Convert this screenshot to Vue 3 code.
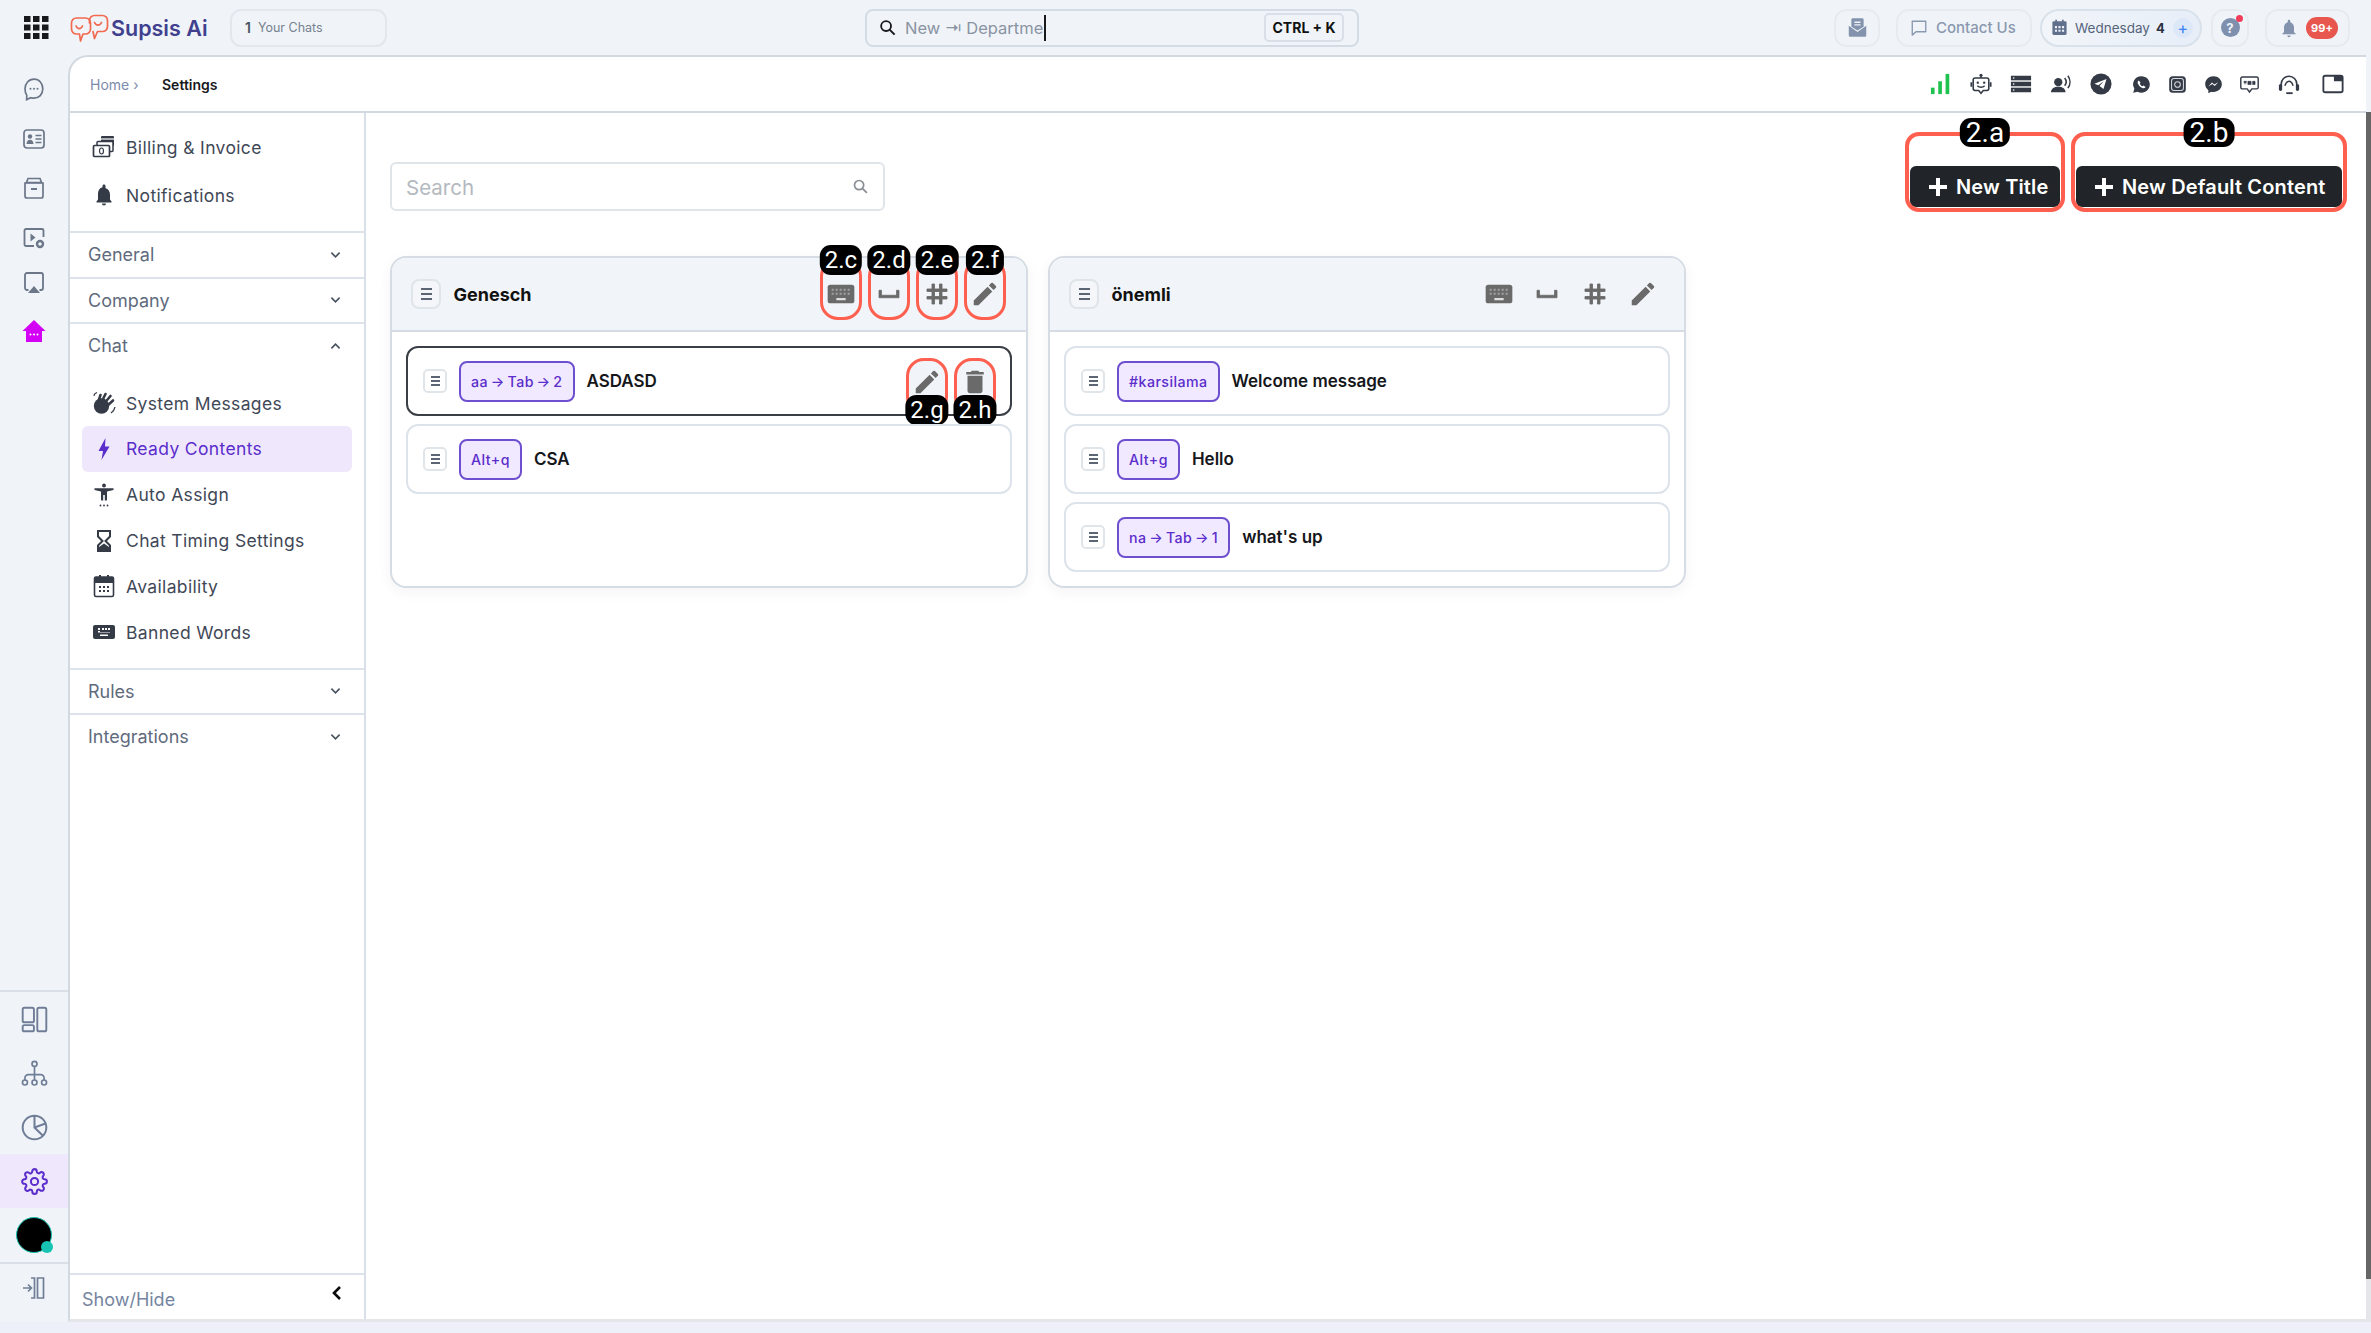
<script setup>
const icons = {
  chat: '<path d="M12 2.200c5.300 0 8.800 4.200 8.800 9.600 0 5.600-3.800 9.400-8.800 9.400-1.200 0-2.200-.1-3.200-.5L4.600 22.600l.2-4.400C3.200 16.400 3 14 3 11.800 3 6.400 6.700 2.200 12 2.200z" fill="none" stroke="#6b7688" stroke-width="1.700"/><circle cx="8.500" cy="11.800" r="1" fill="#6b7688"/><circle cx="12" cy="11.800" r="1" fill="#6b7688"/><circle cx="15.500" cy="11.800" r="1" fill="#6b7688"/>',
  card: '<rect x="2" y="3" width="20" height="18" rx="3" fill="none" stroke="#6b7688" stroke-width="1.700"/><circle cx="8" cy="9.500" r="2.200" fill="#6b7688"/><path d="M4.500 17c.3-3 1.600-4.300 3.500-4.300s3.200 1.300 3.500 4.300z" fill="#6b7688"/><path d="M13.500 8.500h6M13.500 12h6M13.500 15.500h6" stroke="#6b7688" stroke-width="1.600"/>',
  box: '<path d="M6 2.500h12l1.500 4h-15z" fill="none" stroke="#6b7688" stroke-width="1.700"/><path d="M3 7h18v13a2 2 0 0 1-2 2H5a2 2 0 0 1-2-2z" fill="none" stroke="#6b7688" stroke-width="1.700"/><path d="M9 13h6" stroke="#6b7688" stroke-width="2"/>',
  video: '<path d="M12 20H4a1.500 1.500 0 0 1-1.500-1.500v-14A1.500 1.500 0 0 1 4 3h16a1.500 1.500 0 0 1 1.500 1.500V11" fill="none" stroke="#6b7688" stroke-width="1.800"/><path d="M8.500 7.500l5 4-5 4z" fill="#6b7688"/><circle cx="18" cy="18" r="3" fill="none" stroke="#6b7688" stroke-width="2.400"/>',
  air: '<path d="M6.500 19H5a2 2 0 0 1-2-2V4a2 2 0 0 1 2-2h14a2 2 0 0 1 2 2v13a2 2 0 0 1-2 2h-1.500" fill="none" stroke="#6b7688" stroke-width="1.800"/><path d="M12 15l6 7H6z" fill="#6b7688"/>',
  house: '<path d="M12 1L.5 12H4v11h16V12h3.500z" fill="#d400f5"/><circle cx="8.500" cy="15.500" r="1" fill="#fff"/><circle cx="12" cy="15.500" r="1" fill="#fff"/><circle cx="15.500" cy="15.500" r="1" fill="#fff"/>',
  layout: '<rect x="1.500" y="1.500" width="10" height="13" rx="1.500" fill="none" stroke="#6f7d97" stroke-width="1.700"/><rect x="1.500" y="17" width="10" height="5.500" rx="1.500" fill="none" stroke="#6f7d97" stroke-width="1.700"/><rect x="14.500" y="1.500" width="8" height="21" rx="1.500" fill="none" stroke="#6f7d97" stroke-width="1.700"/>',
  tree: '<circle cx="12" cy="3.500" r="2.200" fill="none" stroke="#6f7d97" stroke-width="1.500"/><circle cx="3.500" cy="20" r="2.200" fill="none" stroke="#6f7d97" stroke-width="1.500"/><circle cx="12" cy="20" r="2.200" fill="none" stroke="#6f7d97" stroke-width="1.500"/><circle cx="20.500" cy="20" r="2.200" fill="none" stroke="#6f7d97" stroke-width="1.500"/><path d="M12 5.700v12.100M3.500 17.800v-1.800a3 3 0 0 1 3-3h11a3 3 0 0 1 3 3v1.800" fill="none" stroke="#6f7d97" stroke-width="1.500"/>',
  pie: '<circle cx="12" cy="12" r="10.500" fill="none" stroke="#6f7d97" stroke-width="1.800"/><path d="M12 1.500V12l7.500 7.300M12 12l9.800-3.500" fill="none" stroke="#6f7d97" stroke-width="1.800"/>',
  collapse: '<path d="M1 12h8M6 8.500l3.500 3.500L6 15.500" fill="none" stroke="#6f7d97" stroke-width="1.700"/><path d="M9 2h3.500v20H9M15.500 2h6v20h-6z" fill="none" stroke="#6f7d97" stroke-width="1.700"/>',
  signal: '<rect x="1" y="16" width="4" height="7" fill="#1fc24e"/><rect x="9" y="9" width="4" height="14" fill="#1fc24e"/><rect x="17" y="1" width="4" height="22" fill="#1fc24e"/>',
  bot: '<path d="M12 1.500v4" stroke="#343a46" stroke-width="1.600"/><circle cx="12" cy="2.500" r="1.700" fill="#343a46"/><path d="M5.500 5.500h13a2 2 0 0 1 2 2v9.500a2 2 0 0 1-2 2h-4l-2.500 3-2.500-3h-4a2 2 0 0 1-2-2V7.500a2 2 0 0 1 2-2z" fill="none" stroke="#343a46" stroke-width="1.700"/><circle cx="8.500" cy="10.500" r="1.300" fill="#343a46"/><circle cx="15.500" cy="10.500" r="1.300" fill="#343a46"/><path d="M8 14c2 2 6 2 8 0" fill="none" stroke="#343a46" stroke-width="1.500"/><path d="M1.500 10v5M22.500 10v5" stroke="#343a46" stroke-width="2"/>',
  server: '<rect x="1" y="3" width="22" height="5" fill="#343a46"/><rect x="1" y="9.500" width="22" height="5" fill="#343a46"/><rect x="1" y="16" width="22" height="5" fill="#343a46"/><circle cx="4" cy="5.500" r=".9" fill="#fff"/><circle cx="4" cy="12" r=".9" fill="#fff"/><circle cx="4" cy="18.500" r=".9" fill="#fff"/>',
  voice: '<circle cx="9" cy="10" r="4.500" fill="#343a46"/><path d="M1 21c.5-4.500 3.500-6 8-6s7.500 1.500 8 6z" fill="#343a46"/><path d="M16 5.500c2 2.500 2 6 0 8.500M19.500 3c3 4 3 9.500 0 13.500" fill="none" stroke="#343a46" stroke-width="1.700"/>',
  telegram: '<circle cx="12" cy="12" r="11.500" fill="#343a46"/><path d="M18 6.500L4.800 11.800l4.200 1.500 6-4.300-4.600 5.200 4.300 3.300z" fill="#fff"/>',
  whatsapp: '<path d="M12 1.500c5.800 0 10.500 4.500 10.500 10.300S17.800 22.300 12 22.300c-1.800 0-3.500-.5-5-1.300l-5.500 1.500 1.500-5.200A10.300 10.300 0 0 1 12 1.500z" fill="#343a46"/><path d="M8.500 6.800c-1.500 1-1.800 2.600-.8 4.700 1.100 2.300 3 4.200 5.200 5 1.800.7 3.500.2 4.200-1.200l-2.500-2-1.400 1c-1.600-.7-2.700-1.900-3.400-3.300l1-1.400z" fill="#fff"/>',
  insta: '<rect x="1.500" y="1.500" width="21" height="21" rx="4.500" fill="#343a46"/><rect x="4.500" y="4.500" width="15" height="15" rx="3" fill="none" stroke="#d8dbe0" stroke-width="1.300"/><circle cx="12" cy="12" r="3.600" fill="none" stroke="#d8dbe0" stroke-width="1.300"/>',
  messenger: '<path d="M12 1.500c5.900 0 10.500 4.300 10.500 10S17.900 21.500 12 21.500c-1 0-2-.1-2.900-.4L5.500 23v-3.800A9.700 9.700 0 0 1 1.500 11.500c0-5.700 4.600-10 10.500-10z" fill="#343a46"/><path d="M5.500 14.500l4.500-5 3 2.500 5-3-4.500 5-3-2.500z" fill="#fff"/>',
  sms: '<path d="M3 2.500h18a2 2 0 0 1 2 2v11a2 2 0 0 1-2 2h-6l-3 4-3-4H3a2 2 0 0 1-2-2v-11a2 2 0 0 1 2-2z" fill="none" stroke="#343a46" stroke-width="1.800"/><path d="M5 8h3v1.500H5zM5 11h3M10 8h4v4h-4zM16 8h3v4h-3z" fill="#343a46" stroke="#343a46" stroke-width=".8"/>',
  headset: '<path d="M3.500 15v-3a8.500 8.500 0 0 1 17 0v3" fill="none" stroke="#343a46" stroke-width="1.800"/><rect x="1" y="12" width="3.500" height="7.500" rx="1.700" fill="#343a46"/><rect x="19.500" y="12" width="3.500" height="7.500" rx="1.700" fill="#343a46"/><path d="M7.500 14c1-3 2.800-5 4.500-5s3.500 2 4.500 5" fill="none" stroke="#343a46" stroke-width="1.600"/><path d="M9 22h7" stroke="#343a46" stroke-width="2"/>',
  windowi: '<rect x="1.500" y="3" width="21" height="18" rx="2" fill="none" stroke="#343a46" stroke-width="2"/><path d="M13 3h9.500v6H13z" fill="#343a46"/>',
  billing: '<rect x="9" y="1" width="13" height="10" rx="1" fill="#343a46"/><path d="M9 4h13" stroke="#fff" stroke-width="1.200"/><rect x="5" y="6.500" width="16" height="10" rx="1" fill="#fff" stroke="#343a46" stroke-width="1.500"/><rect x="1.500" y="10.500" width="16" height="11" rx="1" fill="#fff" stroke="#343a46" stroke-width="1.700"/><ellipse cx="9.500" cy="16" rx="2" ry="3" fill="none" stroke="#343a46" stroke-width="1.200"/>',
  bell: '<path d="M12 22.500c1.100 0 2-.9 2-2h-4c0 1.100.89 2 2 2zm6-6v-5c0-3.070-1.640-5.640-4.500-6.320V3c0-.83-.67-1.500-1.500-1.500s-1.500.67-1.500 1.500v1.180C7.630 4.860 6 7.420 6 10.500v6l-1.500 2v1h15v-1z" fill="#343a46"/>',
  wave: '<circle cx="9.500" cy="15" r="7.700" fill="#343a46"/><path d="M6.500 10l2-6M10 10l3.500-7M13 11.500l5.500-6.500M15 15l6-5.500" stroke="#343a46" stroke-width="2.600" stroke-linecap="round" fill="none"/><path d="M5 1.500C3.500 2 2.300 3.200 1.800 4.700M23 16c-.4 2.500-1.800 4.500-4 6" fill="none" stroke="#343a46" stroke-width="1.300"/>',
  bolt: '<path d="M13.500 1L6.500 14h4.500L9.500 23l8-13.500H13z" fill="#5b2dcb"/>',
  person: '<circle cx="12" cy="2.500" r="1.900" fill="#343a46"/><path d="M2.500 5.300h19v1.700L15 8.500V17h-2v-5h-2v5H9V8.500L2.500 7z" fill="#343a46"/><path d="M9.200 10h2v7.500h-2zM12.800 10h2v7.500h-2z" fill="#343a46"/><circle cx="8.500" cy="22.500" r=".9" fill="#343a46"/><circle cx="12" cy="22.500" r=".9" fill="#343a46"/><circle cx="15.500" cy="22.500" r=".9" fill="#343a46"/>',
  hourglass: '<path d="M6 2h12v5.500L13.500 12l4.500 4.500V22H6v-5.500l4.500-4.500L6 7.500z" fill="none" stroke="#343a46" stroke-width="2"/><path d="M7 21v-3l5-3.500 5 3.500v3z" fill="#343a46"/>',
  calendar: '<path d="M7 1h2v3H7zM15 1h2v3h-2z" fill="#343a46"/><rect x="2.500" y="3" width="19" height="19.500" rx="1.500" fill="#fff" stroke="#343a46" stroke-width="1.600"/><rect x="2.500" y="3" width="19" height="6" fill="#343a46"/><path d="M7 12h2v2H7zM11 12h2v2h-2zM15 12h2v2h-2zM7 16h2v2H7zM11 16h2v2h-2zM15 16h2v2h-2z" fill="#343a46"/>',
  keyboard: '<path d="M21 5H3a2 2 0 0 0-2 2v10a2 2 0 0 0 2 2h18a2 2 0 0 0 2-2V7a2 2 0 0 0-2-2zM6 8h2v2H6zm0 3h2v2H6zm10 5H8v-1.500h8zm2-3H6v-.5h12zm0-3h-2V8h2zm-3 0h-2V8h2zm-3 0h-2V8h2z" fill="#343a46"/>',
  kb: '<rect x="2" y="5" width="20" height="14" rx="2" fill="#6a6a6a"/><path d="M5 8h1.500v1.500H5zM8 8h1.500v1.500H8zM11 8h1.500v1.500H11zM14 8h1.500v1.500H14zM17 8h1.500v1.500H17zM5 11h1.500v1.500H5zM8 11h1.500v1.500H8zM11 11h1.500v1.500H11zM14 11h1.500v1.500H14zM17 11h1.500v1.500H17z" fill="#a2a2a2"/><rect x="8.500" y="15" width="7" height="1.700" fill="#dedede"/>',
  space: '<path d="M18 9v4H6V9H4v6h16V9z" fill="#6a6a6a" stroke="#6a6a6a" stroke-width=".6"/>',
  hash: '<path d="M20 10V8h-4V4h-2v4h-4V4H8v4H4v2h4v4H4v2h4v4h2v-4h4v4h2v-4h4v-2h-4v-4h4zm-6 4h-4v-4h4v4z" fill="#6a6a6a" stroke="#6a6a6a" stroke-width=".7"/>',
  pencil: '<path d="M3 17.250V21h3.750L17.810 9.940l-3.750-3.750L3 17.250zM20.710 7.040a1 1 0 0 0 0-1.410l-2.340-2.340a1 1 0 0 0-1.410 0l-1.830 1.830 3.750 3.750 1.830-1.830z" fill="#6a6a6a"/>',
  trash: '<path d="M6 19c0 1.100.9 2 2 2h8c1.100 0 2-.9 2-2V7H6v12zM19 4h-3.500l-1-1h-5l-1 1H5v2h14V4z" fill="#6a6a6a"/>'
}

const railTop = ['chat', 'card', 'box', 'video', 'air', 'house']
const railBottom = ['layout', 'tree', 'pie']
const statusIcons = [
  { name: 'signal', cls: 'w22' }, { name: 'bot', cls: 'w22' }, { name: 'server', cls: 'w22' },
  { name: 'voice', cls: 'w22' }, { name: 'telegram', cls: 'w22' }, { name: 'whatsapp', cls: 'w20' },
  { name: 'insta', cls: 'w20' }, { name: 'messenger', cls: 'w20' }, { name: 'sms', cls: 'w20' },
  { name: 'headset', cls: 'w22' }, { name: 'windowi', cls: 'w22' }
]
const topMenu = [
  { icon: 'billing', label: 'Billing & Invoice' },
  { icon: 'bell', label: 'Notifications' }
]
const chatMenu = [
  { icon: 'wave', label: 'System Messages' },
  { icon: 'bolt', label: 'Ready Contents', active: true },
  { icon: 'person', label: 'Auto Assign' },
  { icon: 'hourglass', label: 'Chat Timing Settings' },
  { icon: 'calendar', label: 'Availability' },
  { icon: 'keyboard', label: 'Banned Words' }
]
const headActions = [
  { icon: 'kb', mark: '2.c' }, { icon: 'space', mark: '2.d' },
  { icon: 'hash', mark: '2.e' }, { icon: 'pencil', mark: '2.f' }
]
const cards = [
  {
    title: 'Genesch', marked: true,
    rows: [
      { chip: 'aa → Tab → 2', title: 'ASDASD', hover: true },
      { chip: 'Alt+q', title: 'CSA' }
    ]
  },
  {
    title: 'önemli', marked: false,
    rows: [
      { chip: '#karsilama', title: 'Welcome message' },
      { chip: 'Alt+g', title: 'Hello' },
      { chip: 'na → Tab → 1', title: "what's up" }
    ]
  }
]
</script>

<template>
  <div class="app">
    <header class="topbar">
      <div class="top-left">
        <svg class="apps" viewBox="0 0 25 23">
          <g fill="#17191d">
            <rect x="0" y="0" width="6.500" height="6" /><rect x="9" y="0" width="6.500" height="6" /><rect x="18" y="0" width="6.500" height="6" />
            <rect x="0" y="8.500" width="6.500" height="6" /><rect x="9" y="8.500" width="6.500" height="6" /><rect x="18" y="8.500" width="6.500" height="6" />
            <rect x="0" y="17" width="6.500" height="6" /><rect x="9" y="17" width="6.500" height="6" /><rect x="18" y="17" width="6.500" height="6" />
          </g>
        </svg>
        <svg class="logo" viewBox="0 0 38 28">
          <g fill="none" stroke="#f2694f" stroke-width="1.700" stroke-linejoin="round" stroke-linecap="round">
            <path d="M6 4h9a5 5 0 0 1 5 5v6a5 5 0 0 1-5 5h-2.500L10 27l-1-7H6a5 5 0 0 1-5-5V9a5 5 0 0 1 5-5z" />
            <path d="M24 1.500h8a5 5 0 0 1 5 5v6a5 5 0 0 1-5 5h-5l-3 7-1.500-7M19 9V6.500a5 5 0 0 1 5-5" />
            <path d="M5.500 12c1.500 3.500 5 3.500 6.500 0M24 8.500c1.500 3.500 5.500 3.500 7 0" />
          </g>
        </svg>
        <span class="brand">Supsis Ai</span>
        <div class="your-chats"><b>1</b><span>Your Chats</span></div>
      </div>
      <div class="searchbar">
        <svg class="search-ico" viewBox="0 0 24 24"><circle cx="10" cy="10" r="7" fill="none" stroke="#17191d" stroke-width="2.600" /><path d="M15 15l7 7" stroke="#17191d" stroke-width="2.800" /></svg>
        <span class="search-text">New ⇥ Departme</span><i class="caret"></i>
        <kbd class="shortcut">CTRL + K</kbd>
      </div>
      <div class="top-right">
        <div class="tbtn mail">
          <svg viewBox="0 0 24 24"><path d="M2 10l10 7 10-7v11a1.500 1.500 0 0 1-1.500 1.500h-17A1.500 1.500 0 0 1 2 21z" fill="#8393ad" /><path d="M5 11V3a1.500 1.500 0 0 1 1.500-1.500h11A1.500 1.500 0 0 1 19 3v8l-7 4.500z" fill="#8393ad" /><path d="M8.500 6h7M8.500 9h7" stroke="#f0f4f8" stroke-width="1.500" /></svg>
        </div>
        <div class="tbtn contact">
          <svg viewBox="0 0 24 24"><path d="M3 3h18v14H8l-5 4.500z" fill="none" stroke="#8a98b0" stroke-width="1.800" stroke-linejoin="round" /></svg>
          <span>Contact Us</span>
        </div>
        <div class="tbtn wed">
          <svg viewBox="0 0 24 24"><path d="M6 1h2.500v3H6zM15.500 1H18v3h-2.500z" fill="#5f6f8c" /><rect x="2" y="3" width="20" height="19.500" rx="2" fill="#5f6f8c" /><path d="M5.500 10h3v3h-3zM10.500 10h3v3h-3zM15.500 10h3v3h-3zM5.500 15h3v3h-3zM10.500 15h3v3h-3zM15.500 15h3v3h-3z" fill="#eef2f8" /></svg>
          <span class="wed-day">Wednesday</span><b>4</b>
          <span class="plus">+</span>
        </div>
        <div class="tbtn help">
          <span class="q">?</span><i class="dot"></i>
        </div>
        <div class="tbtn notif">
          <svg viewBox="0 0 24 24"><path d="M12 23c1.100 0 2-.9 2-2h-4c0 1.100.89 2 2 2zm6-6v-5.500c0-3.070-1.640-5.640-4.500-6.320V3.500c0-.83-.67-1.500-1.500-1.500s-1.500.67-1.500 1.500v1.680C7.630 5.860 6 8.420 6 11.500V17l-2 1.500v1h16v-1z" fill="#8393ad" /></svg>
          <span class="badge">99+</span>
        </div>
      </div>
    </header>

    <div class="shell">
      <nav class="rail">
        <div class="rail-top">
          <svg v-for="name in railTop" :key="name" class="rail-ico" viewBox="0 0 24 24" v-html="icons[name]"></svg>
        </div>
        <div class="rail-bottom">
          <div class="rail-item" v-for="name in railBottom" :key="name">
            <svg class="rail-ico big" viewBox="0 0 24 24" v-html="icons[name]"></svg>
          </div>
          <div class="rail-item gear">
            <svg class="rail-ico big" viewBox="0 0 24 24" fill="none" stroke="#5b2dcb" stroke-width="1.800" stroke-linejoin="round">
              <circle cx="12" cy="12" r="3.200" />
              <path d="M19.400 15a1.650 1.650 0 0 0 .33 1.820l.06.06a2 2 0 0 1 0 2.830 2 2 0 0 1-2.830 0l-.06-.06a1.650 1.650 0 0 0-1.820-.33 1.650 1.650 0 0 0-1 1.510V21a2 2 0 0 1-2 2 2 2 0 0 1-2-2v-.09A1.650 1.650 0 0 0 9 19.400a1.650 1.650 0 0 0-1.820.33l-.06.06a2 2 0 0 1-2.830 0 2 2 0 0 1 0-2.830l.06-.06a1.650 1.650 0 0 0 .33-1.820 1.650 1.650 0 0 0-1.510-1H3a2 2 0 0 1-2-2 2 2 0 0 1 2-2h.09A1.650 1.650 0 0 0 4.600 9a1.650 1.650 0 0 0-.33-1.820l-.06-.06a2 2 0 0 1 0-2.830 2 2 0 0 1 2.830 0l.06.06a1.650 1.650 0 0 0 1.820.33H9a1.650 1.650 0 0 0 1-1.510V3a2 2 0 0 1 2-2 2 2 0 0 1 2 2v.09a1.650 1.650 0 0 0 1 1.510 1.650 1.650 0 0 0 1.820-.33l.06-.06a2 2 0 0 1 2.830 0 2 2 0 0 1 0 2.830l-.06.06a1.650 1.650 0 0 0-.33 1.820V9a1.650 1.650 0 0 0 1.510 1H21a2 2 0 0 1 2 2 2 2 0 0 1-2 2h-.09a1.650 1.650 0 0 0-1.510 1z" />
            </svg>
          </div>
          <div class="avatar-wrap"><div class="avatar"><i></i></div></div>
          <div class="rail-foot">
            <svg class="rail-ico" viewBox="0 0 24 24" v-html="icons.collapse"></svg>
          </div>
        </div>
      </nav>

      <section class="panel">
        <div class="crumbs">
          <span class="crumb-home">Home ›</span>
          <span class="crumb-cur">Settings</span>
          <div class="status">
            <svg v-for="s in statusIcons" :key="s.name" :class="s.cls" viewBox="0 0 24 24" v-html="icons[s.name]"></svg>
          </div>
        </div>

        <div class="panel-body">
          <aside class="side">
            <div class="side-scroll">
              <div class="group first">
                <div class="sub" v-for="m in topMenu" :key="m.label">
                  <svg viewBox="0 0 24 24" v-html="icons[m.icon]"></svg><span>{{ m.label }}</span>
                </div>
              </div>
              <div class="sec">General<svg class="chev" viewBox="0 0 12 8"><path d="M1.500 1.500L6 6l4.500-4.500" /></svg></div>
              <div class="sec">Company<svg class="chev" viewBox="0 0 12 8"><path d="M1.500 1.500L6 6l4.500-4.500" /></svg></div>
              <div class="sec open">Chat<svg class="chev" viewBox="0 0 12 8"><path d="M1.500 6.500L6 2l4.500 4.500" /></svg></div>
              <div class="group chat">
                <div class="sub" :class="{ active: m.active }" v-for="m in chatMenu" :key="m.label">
                  <svg viewBox="0 0 24 24" v-html="icons[m.icon]"></svg><span>{{ m.label }}</span>
                </div>
              </div>
              <div class="sec">Rules<svg class="chev" viewBox="0 0 12 8"><path d="M1.500 1.500L6 6l4.500-4.500" /></svg></div>
              <div class="sec last">Integrations<svg class="chev" viewBox="0 0 12 8"><path d="M1.500 1.500L6 6l4.500-4.500" /></svg></div>
            </div>
            <div class="showhide">
              <span>Show/Hide</span>
              <svg viewBox="0 0 12 16"><path d="M9 2L3 8l6 6" fill="none" stroke="#0c0c0c" stroke-width="2.600" /></svg>
            </div>
          </aside>

          <main class="main">
            <div class="toolbar">
              <div class="search">
                <span>Search</span>
                <svg viewBox="0 0 24 24"><circle cx="10" cy="10" r="6.500" fill="none" stroke="#8a8f96" stroke-width="2.400" /><path d="M15 15l6 6" stroke="#8a8f96" stroke-width="2.600" /></svg>
              </div>
              <div class="buttons">
                <button class="primary one">
                  <svg viewBox="0 0 20 20"><path d="M10 1v18M1 10h18" stroke="#fff" stroke-width="4" /></svg>New Title
                  <i class="mark"></i><b class="tag big">2.a</b>
                </button>
                <button class="primary two">
                  <svg viewBox="0 0 20 20"><path d="M10 1v18M1 10h18" stroke="#fff" stroke-width="4" /></svg>New Default Content
                  <i class="mark"></i><b class="tag big">2.b</b>
                </button>
              </div>
            </div>

            <div class="cards">
              <article class="card" v-for="card in cards" :key="card.title">
                <div class="card-head">
                  <span class="handle lg"><i></i><i></i><i></i></span>
                  <h3>{{ card.title }}</h3>
                  <div class="head-actions">
                    <span class="act" v-for="a in headActions" :key="a.icon">
                      <svg :class="'ic-' + a.icon" viewBox="0 0 24 24" v-html="icons[a.icon]"></svg>
                      <template v-if="card.marked">
                        <i class="mark pill"></i><b class="tag">{{ a.mark }}</b>
                      </template>
                    </span>
                  </div>
                </div>
                <div class="card-body">
                  <div class="row" :class="{ hover: r.hover }" v-for="r in card.rows" :key="r.title">
                    <span class="handle"><i></i><i></i><i></i></span>
                    <span class="chip">{{ r.chip }}</span>
                    <span class="row-title">{{ r.title }}</span>
                    <div class="row-actions" v-if="r.hover">
                      <span class="act ract"><svg viewBox="0 0 24 24" v-html="icons.pencil"></svg><i class="mark pill"></i><b class="tag low">2.g</b></span>
                      <span class="act ract"><svg viewBox="0 0 24 24" v-html="icons.trash"></svg><i class="mark pill"></i><b class="tag low">2.h</b></span>
                    </div>
                  </div>
                </div>
              </article>
            </div>
          </main>
        </div>
      </section>
      <div class="scrollbar"><i></i></div>
    </div>
    <div class="foot"></div>
  </div>
</template>

<style>
html, body { margin: 0; padding: 0; background: #f0f4f8; }
</style>

<style scoped>
.app {
  width: 2371px; height: 1333px; overflow: hidden; display: flex; flex-direction: column;
  background: #f0f4f8; font-family: Inter, "Noto Sans", sans-serif; color: #343a46;
}
.topbar { height: 55px; flex: none; display: grid; grid-template-columns: 865px 494px 1fr; align-items: center; }
.top-left { display: flex; align-items: center; padding-left: 24px; }
.apps { width: 25px; height: 23px; }
.logo { width: 39px; height: 28px; margin-left: 21px; }
.brand { margin-left: 2px; width: 119px; font-size: 21.500px; font-weight: 600; color: #40408f; white-space: nowrap; }
.your-chats {
  width: 157px; height: 38px; box-sizing: border-box; border: 2px solid #e2e7ee; border-radius: 11px;
  display: flex; align-items: center; padding-left: 13px; gap: 7px; font-size: 12.500px; color: #76818f;
}
.your-chats b { font-size: 14px; color: #4a5361; font-weight: 600; }

.searchbar {
  height: 38px; box-sizing: border-box; border: 2px solid #d3dbe4; border-radius: 8px;
  display: flex; align-items: center; padding: 0 13px 0 12px; font-size: 16.500px; color: #8a93a3;
}
.search-ico { width: 17px; height: 17px; flex: none; }
.search-text { margin-left: 9px; white-space: nowrap; }
.caret { width: 1.500px; height: 26px; background: #17191d; margin-left: 1px; }
.shortcut {
  margin-left: auto; width: 80px; height: 29px; box-sizing: border-box; border: 2px solid #d8dfe7; border-radius: 5px;
  display: flex; align-items: center; justify-content: center; font-family: Inter, sans-serif; font-size: 14px; font-weight: 700; color: #111; white-space: nowrap;
}
.top-right { display: flex; justify-content: flex-end; padding-right: 21px; }
.tbtn {
  height: 38px; box-sizing: border-box; border: 2px solid #e6ebf1; border-radius: 13px; display: flex; align-items: center; flex: none;
}
.tbtn svg { flex: none; }
.mail { width: 46px; justify-content: center; margin-right: 16px; }
.mail svg { width: 21px; height: 21px; }
.contact { width: 136px; gap: 8px; padding-left: 12px; font-size: 15px; font-weight: 500; color: #8a98b0; margin-right: 8px; }
.contact svg { width: 18px; height: 18px; }
.wed {
  width: 162px; border-radius: 19px; border-color: #d9e1ea; padding-left: 9px; margin-right: 9px; font-size: 13.500px;
  background: linear-gradient(90deg, #f2f5f9, #e7eef8); color: #55647c;
}
.wed svg { width: 17px; height: 17px; margin-right: 7px; }
.wed b { margin-left: 6px; color: #2a3240; font-size: 13px; }
.plus {
  width: 20px; height: 20px; margin-left: 8px; border-radius: 50%; background: #dce8f8; color: #3b82f6; font-size: 16px;
  display: flex; align-items: center; justify-content: center;
}
.help { width: 38px; justify-content: center; position: relative; margin-right: 16px; }
.q {
  width: 19px; height: 19px; border-radius: 50%; background: #7f90ae; color: #eef2f8; font-size: 13px; font-weight: 700;
  display: flex; align-items: center; justify-content: center;
}
.dot { position: absolute; width: 7px; height: 7px; border-radius: 50%; background: #f03d5a; right: 4px; top: 4px; }
.notif { width: 85px; padding-left: 12px; gap: 7px; }
.notif svg { width: 20px; height: 22px; }
.badge {
  width: 32px; height: 22px; border-radius: 11px; background: #e8574e; color: #fff; font-size: 11px; font-weight: 700;
  display: flex; align-items: center; justify-content: center;
}

.shell { flex: 1; min-height: 0; display: flex; }
.rail { width: 68px; flex: none; display: flex; flex-direction: column; justify-content: space-between; }
.rail-top { display: flex; flex-direction: column; align-items: center; gap: 25.500px; padding-top: 22px; }
.rail-top .rail-ico:nth-child(5) { margin-top: -4px; }
.rail-top .rail-ico:nth-child(6) { margin-top: -2px; }
.rail-ico { width: 24px; height: 24px; display: block; }
.rail-ico.big { width: 27px; height: 27px; }
.rail-bottom { display: flex; flex-direction: column; border-top: 2px solid #d8dfe7; height: 332px; box-sizing: border-box; }
.rail-item { height: 54px; flex: none; display: flex; align-items: center; justify-content: center; }
.rail-item.gear { background: #efe8fd; }
.avatar-wrap { height: 54px; flex: none; display: flex; align-items: center; justify-content: center; }
.avatar { width: 34px; height: 34px; border-radius: 50%; background: #000; border: 1px solid #17c3b2; position: relative; }
.avatar i { position: absolute; right: -2px; bottom: -1px; width: 12px; height: 12px; border-radius: 50%; background: #17c3b2; }
.rail-foot { border-top: 2px solid #d8dfe7; flex: 1; display: flex; justify-content: center; padding-top: 12px; }

.panel {
  flex: 1; min-width: 0; display: flex; flex-direction: column; background: #fff; box-sizing: border-box;
  border-top: 2px solid #d2d9e1; border-left: 2px solid #d2d9e1; border-bottom: 3px solid #e4e6ea; border-top-left-radius: 20px;
}
.crumbs {
  height: 54px; flex: none; box-sizing: border-box; display: flex; align-items: center; padding: 0 22px 0 20px;
  font-size: 14px; white-space: nowrap;
}
.crumb-home { color: #7d8bab; width: 72px; }
.crumb-cur { color: #17191d; font-weight: 600; }
.status { margin-left: auto; display: flex; align-items: center; }
.status svg { display: block; }
.status .w22 { width: 22px; height: 22px; margin-left: 18px; }
.status .w20 { width: 19px; height: 19px; margin-left: 17px; }
.status svg:first-child { margin-left: 0; }
.status svg:nth-child(6) { margin-left: 20px; }
.status svg:nth-child(10) { margin-left: 19.500px; }
.status svg:nth-child(11) { margin-left: 22px; }

.panel-body { flex: 1; min-height: 0; display: flex; border-top: 2px solid #d2d9e1; }
.side { width: 296px; flex: none; box-sizing: border-box; border-right: 2px solid #d8dfe7; display: flex; flex-direction: column; }
.side-scroll { flex: 1; min-height: 0; }
.group.first { padding: 10px 12px 12px 12px; }
.group.chat { padding: 12.500px 12px 12.500px 12px; }
.sub {
  height: 45.800px; display: flex; align-items: center; padding-left: 10px; border-radius: 6px; font-size: 17.500px; letter-spacing: .35px;
  color: #3f4857; white-space: nowrap;
}
.first .sub { height: 48px; }
.sub svg { width: 24px; height: 24px; flex: none; margin-right: 10px; }
.sub.active { background: #efe8fd; color: #5b2dcb; }
.sec {
  height: 43.600px; border-top: 2px solid #dde3ea; display: flex; align-items: center; justify-content: space-between;
  padding: 0 23px 0 18px; font-size: 18px; color: #5f6b7d;
}
.chev { width: 11px; height: 8px; fill: none; stroke: #4a5361; stroke-width: 1.800; }
.showhide {
  height: 46px; box-sizing: border-box; border-top: 2px solid #dde3ea; display: flex; align-items: center; justify-content: space-between;
  padding: 0 21px 0 12px; font-size: 18px; color: #76859f;
}
.showhide span { padding-top: 5px; }
.showhide svg { width: 12px; height: 16px; margin-top: -8px; }

.main { flex: 1; min-width: 0; box-sizing: border-box; padding: 49px 24px 0 24px; }
.toolbar { display: flex; align-items: center; justify-content: space-between; }
.search {
  width: 495px; height: 49px; box-sizing: border-box; border: 2px solid #e0e5ea; border-radius: 6px;
  display: flex; align-items: center; justify-content: space-between; padding: 0 14px; font-size: 20.500px; color: #b4b9c0;
}
.search span { padding-top: 2px; }
.search svg { width: 17px; height: 17px; }
.buttons { display: flex; gap: 16px; }
.primary {
  position: relative; height: 41px; box-sizing: border-box; border: 0; border-radius: 6px; background: #212529; color: #fff;
  font-family: inherit; font-size: 20px; font-weight: 600; letter-spacing: .15px; display: flex; align-items: center; gap: 8px; padding: 0 0 0 18px; white-space: nowrap;
}
.primary.one { width: 150px; }
.primary.two { width: 266px; }
.primary svg { width: 20px; height: 20px; flex: none; }
.mark { position: absolute; box-sizing: border-box; border: 4px solid #ff5f4f; border-radius: 14px; left: -5px; right: -5px; top: -34px; bottom: -5px; pointer-events: none; }
.tag {
  position: absolute; left: 50%; transform: translateX(-50%); top: -13px; height: 30px; padding: 0 5px; background: #000; color: #fff; border-radius: 11px;
  font-family: Roboto, sans-serif; font-weight: 400; font-size: 24px; letter-spacing: 0; line-height: 30px; white-space: nowrap;
}
.tag.big { top: -48px; font-size: 28px; height: 29px; line-height: 29px; padding: 0 6px; }

.cards { display: grid; grid-template-columns: 638px 638px; gap: 20px; margin-top: 45px; }
.card { box-sizing: border-box; height: 332px; border: 2px solid #d5dce4; border-radius: 16px; box-shadow: 0 4px 14px rgba(30, 40, 60, .05); }
.card-head {
  height: 72px; border-bottom: 2px solid #d5dce4; background: #f1f4f8; border-radius: 14px 14px 0 0;
  display: flex; align-items: center; padding: 0 20px 0 19px;
}
.card-head h3 { margin: 0 0 0 12.500px; font-size: 18px; font-weight: 700; color: #111; }
.handle {
  width: 24px; height: 24px; box-sizing: border-box; border: 2px solid #e0e5ea; border-radius: 5px; background: #fff; flex: none;
  display: flex; flex-direction: column; align-items: center; justify-content: center; gap: 2.500px;
}
.handle i { width: 9px; height: 1.500px; background: #5c6573; display: block; }
.handle.lg { width: 30px; height: 30px; border-radius: 8px; background: #f4f6f9; gap: 3px; }
.handle.lg i { width: 11px; height: 2px; }
.head-actions { margin-left: auto; display: flex; gap: 6px; align-self: flex-start; }
.act { position: relative; width: 42px; height: 62px; box-sizing: border-box; padding-top: 10px; display: flex; align-items: center; justify-content: center; }
.act svg { width: 30px; height: 30px; }
.act .ic-kb { width: 32px; height: 32px; }
.act .mark.pill { left: 0; right: 0; top: 0; bottom: 0; border-width: 3px; border-radius: 18px; }
.card-body { padding: 14px 14px 0; display: flex; flex-direction: column; gap: 8px; }
.row {
  position: relative; height: 70px; box-sizing: border-box; border: 2px solid #dde3ea; border-radius: 12px; display: flex; align-items: center; padding: 0 14px 0 15px;
}
.row.hover { border-color: #3a3e45; }
.chip {
  margin-left: 12px; height: 41px; box-sizing: border-box; padding: 0 10px; border: 2px solid #6d4fd0; border-radius: 8px; background: #f1e9ff;
  display: flex; align-items: center; font-size: 14.200px; letter-spacing: .45px; word-spacing: -1.500px; font-weight: 500; color: #5b2dcb; white-space: nowrap;
}
.row-title { margin-left: 12px; font-size: 17px; font-weight: 600; color: #15171b; }
.row-actions { margin-left: auto; display: flex; gap: 6px; height: 57px; margin-top: 10px; }
.ract { height: 57px; padding-top: 0; background: #f1f4f8; border-radius: 18px; }
.ract svg { margin-top: -9px; }
.tag.low { top: 37px; }

.scrollbar { width: 5px; flex: none; background: #e4e6e9; margin-top: 57px; }
.scrollbar i { display: block; height: 1167px; background: #666; }
.foot { height: 11px; flex: none; background: #edf0f8; }
</style>
